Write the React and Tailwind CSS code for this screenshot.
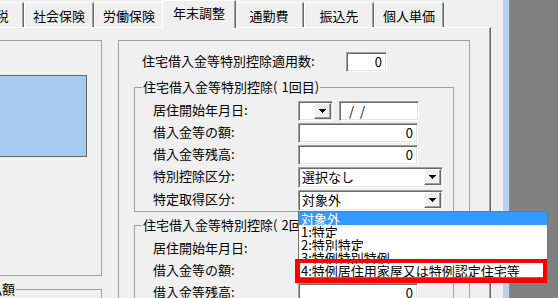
import React from "react";

const sunken =
  "bg-white border border-t-[#a0a0a0] border-l-[#a0a0a0] border-r-white border-b-white shadow-[inset_1px_1px_0_#696969,inset_-1px_-1px_0_#e3e3e3]";

function Arrow() {
  return (
    <svg width="7" height="4" viewBox="0 0 7 4" className="block">
      <rect x="0" y="0" width="7" height="1" fill="#000" />
      <rect x="1" y="1" width="5" height="1" fill="#000" />
      <rect x="2" y="2" width="3" height="1" fill="#000" />
      <rect x="3" y="3" width="1" height="1" fill="#000" />
    </svg>
  );
}

function DropBtn() {
  return (
    <div className="w-[17px] h-[16px] shrink-0 flex items-center justify-center bg-[#f0f0f0] border border-t-white border-l-white border-r-[#696969] border-b-[#696969] shadow-[inset_-1px_-1px_0_#a0a0a0]">
      <Arrow />
    </div>
  );
}

function Tab({ label, selected, className = "" }) {
  if (selected) {
    return (
      <div
        className={`relative z-10 -mx-[2px] -mb-[1px] w-[74px] h-[28px] shrink-0 flex justify-center pt-[5px] bg-[#f0f0f0] border-t border-l border-white border-r border-r-[#696969] shadow-[inset_-1px_0_0_#a0a0a0] ${className}`}
      >
        {label}
      </div>
    );
  }
  return (
    <div
      className={`w-[70px] h-[25px] shrink-0 flex items-center justify-center pt-[1px] border-t border-l border-white border-r border-r-[#696969] shadow-[inset_-1px_0_0_#a0a0a0] ${className}`}
    >
      {label}
    </div>
  );
}

function Row({ label, children, className = "" }) {
  return (
    <div className={`flex items-center h-[20px] ${className}`}>
      <span className="pl-[18px] w-[163px] shrink-0 whitespace-nowrap -mt-[2px]">{label}</span>
      {children}
    </div>
  );
}

function NumBox({ w = "w-[120px]" }) {
  return (
    <div className={`${sunken} ${w} h-[20px] flex items-center justify-end pr-[4px]`}>0</div>
  );
}

function DateCtl() {
  return (
    <div className="flex gap-[6px]">
      <div className={`${sunken} w-[35px] h-[20px] flex items-center justify-end p-[1px]`}>
        <DropBtn />
      </div>
      <div className={`${sunken} w-[80px] h-[20px] flex items-center pl-[9px] tracking-[6px]`}>
        //
      </div>
    </div>
  );
}

function Combo({ text }) {
  return (
    <div className={`${sunken} w-[145px] h-[21px] flex items-center p-[1px]`}>
      <span className="flex-1 pl-[2px] whitespace-nowrap">{text}</span>
      <DropBtn />
    </div>
  );
}

function Group({ n, className = "", children }) {
  return (
    <fieldset
      className={`ml-[15px] w-[320px] shrink-0 border border-[#a0a0a0] pb-[1px] ${className}`}
    >
      <legend className="ml-[7px] px-[1px] leading-[14px] whitespace-nowrap">
        住宅借入金等特別控除(<span className="ml-[4px]">{n}回目)</span>
      </legend>
      <div className="flex flex-col gap-[2px] pt-[7px]">{children}</div>
    </fieldset>
  );
}

export default function App() {
  return (
    <div className="relative flex w-[558px] h-[298px] overflow-hidden bg-[#f0f0f0] text-black text-[13px] leading-[14px] font-['Noto_Sans_CJK_JP','Noto_Sans',sans-serif]">
      <div className="flex flex-col w-[491px] shrink-0">
        <div className="flex items-end h-[27px] shrink-0">
          <Tab label="住民税" className="-ml-[46px]" />
          <Tab label="社会保険" />
          <Tab label="労働保険" />
          <Tab label="年末調整" selected />
          <Tab label="通勤費" />
          <Tab label="振込先" />
          <Tab label="個人単価" />
        </div>
        <div className="flex-1 flex gap-[16px] pt-[12px] border-t border-t-white border-r border-r-[#696969] shadow-[inset_-1px_0_0_#a0a0a0] overflow-hidden">
          {/* left column */}
          <div className="w-[102px] shrink-0 flex flex-col overflow-hidden">
            <div className="h-[236px] shrink-0 border-t border-r border-b border-[#a0a0a0] pt-[34px]">
              <div className="w-[87px] h-[82px] bg-[#a6caf0] border-t border-r border-b border-[#646464]" />
            </div>
            <fieldset className="mt-[6px] -ml-[30px] w-[132px] h-[40px] shrink-0 border-t border-r border-[#a0a0a0]">
              <legend className="ml-[5px] px-[1px] whitespace-nowrap">支払額</legend>
            </fieldset>
          </div>

          {/* main group */}
          <div className="w-[352px] h-[300px] shrink-0 border border-[#a0a0a0] flex flex-col">
            <div className="flex items-center mt-[11px] h-[20px] shrink-0">
              <span className="pl-[23px] w-[227px] shrink-0 whitespace-nowrap -mt-[2px]">
                住宅借入金等特別控除適用数:
              </span>
              <NumBox w="w-[41px]" />
            </div>

            <Group n="1" className="mt-[8px]">
              <Row label="居住開始年月日:">
                <DateCtl />
              </Row>
              <Row label="借入金等の額:">
                <NumBox />
              </Row>
              <Row label="借入金等残高:">
                <NumBox />
              </Row>
              <Row label="特別控除区分:">
                <Combo text="選択なし" />
              </Row>
              <Row label="特定取得区分:" className="mt-[1px]">
                <Combo text="対象外" />
              </Row>
            </Group>

            <Group n="2" className="mt-[6px]">
              <Row label="居住開始年月日:">
                <DateCtl />
              </Row>
              <Row label="借入金等の額:">
                <NumBox />
              </Row>
              <Row label="借入金等残高:">
                <NumBox />
              </Row>
            </Group>
          </div>
        </div>
      </div>
      <div className="w-[12px] shrink-0" />
      <div className="w-[6px] shrink-0 bg-[#b9d1ea]" />
      <div className="w-[1px] shrink-0 bg-[#4d9be0]" />
      <div className="flex-1 bg-[#808080]" />

      {/* open dropdown list */}
      <div className="absolute left-[298px] top-[211px] w-[250px] h-[67px] bg-white border border-[#767676] flex flex-col">
        <div className="h-[13px] leading-[13px] shrink-0 overflow-hidden bg-[#3399ff] text-white pl-[2px]">対象外</div>
        <div className="h-[13px] leading-[13px] shrink-0 overflow-hidden pl-[2px]">1:特定</div>
        <div className="h-[13px] leading-[13px] shrink-0 overflow-hidden pl-[2px]">2:特別特定</div>
        <div className="h-[13px] leading-[13px] shrink-0 overflow-hidden pl-[2px]">3:特例特別特例</div>
        <div className="h-[13px] leading-[13px] shrink-0 overflow-hidden pl-[2px] whitespace-nowrap">
          4:特例居住用家屋又は特例認定住宅等
        </div>
      </div>

      {/* red highlight */}
      <div className="absolute left-[295px] top-[259px] w-[252px] h-[24px] border-[4px] border-l-[5px] border-b-[5px] border-[#ff0000]" />
    </div>
  );
}
